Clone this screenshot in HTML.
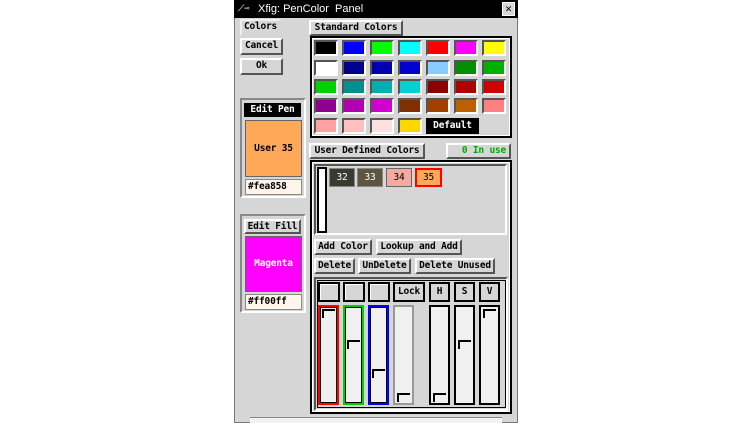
<!DOCTYPE html><html><head><style>
body{margin:0;width:752px;height:423px;background:#fff;position:relative;overflow:hidden;font-family:"DejaVu Sans Mono","Liberation Mono",monospace;font-weight:bold;font-size:9.5px;letter-spacing:-0.2px}
div{position:absolute;box-sizing:border-box;white-space:nowrap}
.b{border:2px solid;border-color:#fff #555 #555 #fff;background:#d6d6d6;text-align:center;line-height:12px;color:#000;padding:0}
.sw{width:24px;height:16px;border:2px solid;border-color:#555 #fff #fff #555}
.fr{border:2px solid #000;box-shadow:inset 0 0 0 1px #fff}
.sl{width:21px;height:100px;border:2px solid #000;background:#f0f0f0}
.th{left:2px;width:13px;height:9px;border-top:2px solid #000;border-left:2px solid #000}
</style></head><body>
<div style="left:234px;top:0;width:284px;height:423px;background:#d6d6d6;border:1px solid #777"></div>
<div style="left:234px;top:0;width:284px;height:18px;background:#000;color:#fff;font-family:'Liberation Sans',sans-serif;font-size:11px;font-weight:normal;letter-spacing:0;line-height:18px;padding-left:24px">Xfig: PenColor &nbsp;Panel</div>
<div style="left:238px;top:4px;width:16px;height:10px;color:#aaa;font-size:9px;line-height:10px">⟋⊸</div>
<div style="left:502px;top:2px;width:13px;height:14px;background:#d6d6d6;border:1px solid #fff;color:#000;font-size:11px;line-height:12px;text-align:center">✕</div>

<div class="b" style="left:240px;top:19px;width:41px;height:17px;border-color:#eee #d6d6d6 #d6d6d6 #eee">Colors</div>
<div class="b" style="left:240px;top:38px;width:43px;height:17px">Cancel</div>
<div class="b" style="left:240px;top:58px;width:43px;height:17px">Ok</div>

<div style="left:240px;top:98px;width:66px;height:100px;border:2px solid;border-color:#888 #fff #fff #888"></div>
<div style="left:244px;top:103px;width:57px;height:14px;background:#000;color:#fff;text-align:center;line-height:14px">Edit Pen</div>
<div style="left:245px;top:120px;width:57px;height:57px;background:#fea858;border:1px solid #666;text-align:center;line-height:55px">User 35</div>
<div style="left:245px;top:179px;width:57px;height:16px;background:#fff5ea;border:1px solid #888;line-height:14px;padding-left:2px">#fea858</div>

<div style="left:240px;top:214px;width:66px;height:99px;border:2px solid;border-color:#888 #fff #fff #888"></div>
<div class="b" style="left:244px;top:219px;width:57px;height:15px">Edit Fill</div>
<div style="left:245px;top:236px;width:57px;height:56px;background:#ff00ff;border:1px solid #666;color:#fff;text-align:center;line-height:54px">Magenta</div>
<div style="left:245px;top:294px;width:57px;height:16px;background:#fff5ea;border:1px solid #888;line-height:14px;padding-left:2px">#ff00ff</div>

<div class="b" style="left:309px;top:20px;width:94px;height:16px;line-height:12px">Standard Colors</div>
<div class="fr" style="left:310px;top:36px;width:202px;height:102px"></div>
<div class="sw" style="left:314px;top:40px;background:#000"></div><div class="sw" style="left:342px;top:40px;background:#00f"></div><div class="sw" style="left:370px;top:40px;background:#0f0"></div><div class="sw" style="left:398px;top:40px;background:#0ff"></div><div class="sw" style="left:426px;top:40px;background:#f00"></div><div class="sw" style="left:454px;top:40px;background:#f0f"></div><div class="sw" style="left:482px;top:40px;background:#ff0"></div>
<div class="sw" style="left:314px;top:60px;background:#fff"></div><div class="sw" style="left:342px;top:60px;background:#00008f"></div><div class="sw" style="left:370px;top:60px;background:#0000b0"></div><div class="sw" style="left:398px;top:60px;background:#0000d1"></div><div class="sw" style="left:426px;top:60px;background:#87ceff"></div><div class="sw" style="left:454px;top:60px;background:#008f00"></div><div class="sw" style="left:482px;top:60px;background:#00b000"></div>
<div class="sw" style="left:314px;top:79px;background:#00d100"></div><div class="sw" style="left:342px;top:79px;background:#008f8f"></div><div class="sw" style="left:370px;top:79px;background:#00b0b0"></div><div class="sw" style="left:398px;top:79px;background:#00d1d1"></div><div class="sw" style="left:426px;top:79px;background:#8f0000"></div><div class="sw" style="left:454px;top:79px;background:#b00000"></div><div class="sw" style="left:482px;top:79px;background:#d10000"></div>
<div class="sw" style="left:314px;top:98px;background:#8f008f"></div><div class="sw" style="left:342px;top:98px;background:#b000b0"></div><div class="sw" style="left:370px;top:98px;background:#d100d1"></div><div class="sw" style="left:398px;top:98px;background:#803000"></div><div class="sw" style="left:426px;top:98px;background:#a14000"></div><div class="sw" style="left:454px;top:98px;background:#bf6000"></div><div class="sw" style="left:482px;top:98px;background:#ff8080"></div>
<div class="sw" style="left:314px;top:118px;background:#ffa1a1"></div><div class="sw" style="left:342px;top:118px;background:#ffbfbf"></div><div class="sw" style="left:370px;top:118px;background:#ffe0e0"></div><div class="sw" style="left:398px;top:118px;background:#ffd700"></div>
<div style="left:426px;top:118px;width:53px;height:16px;background:#000;color:#fff;text-align:center;line-height:16px">Default</div>

<div class="b" style="left:309px;top:143px;width:116px;height:16px">User Defined Colors</div>
<div class="b" style="left:446px;top:143px;width:65px;height:16px;color:#0a0;text-align:right;padding-right:3px">0 In use</div>
<div class="fr" style="left:310px;top:160px;width:202px;height:254px"></div>
<div style="left:314px;top:164px;width:193px;height:71px;border:2px solid;border-color:#555 #fff #fff #555"></div>
<div style="left:317px;top:167px;width:10px;height:66px;background:#fff;border:2px solid #000"></div>
<div style="left:329px;top:168px;width:26px;height:19px;background:#3a3a30;color:#fff;border:1px solid #888;text-align:center;line-height:17px;font-weight:normal">32</div>
<div style="left:357px;top:168px;width:26px;height:19px;background:#5e5541;color:#fff;border:1px solid #888;text-align:center;line-height:17px;font-weight:normal">33</div>
<div style="left:386px;top:168px;width:26px;height:19px;background:#f4aaa0;color:#000;border:1px solid #666;text-align:center;line-height:17px;font-weight:normal">34</div>
<div style="left:415px;top:168px;width:27px;height:19px;background:#fea858;color:#000;border:2px solid #f00;text-align:center;line-height:15px;font-weight:normal">35</div>

<div class="b" style="left:314px;top:239px;width:58px;height:16px">Add Color</div>
<div class="b" style="left:376px;top:239px;width:86px;height:16px">Lookup and Add</div>
<div class="b" style="left:314px;top:258px;width:41px;height:16px">Delete</div>
<div class="b" style="left:358px;top:258px;width:53px;height:16px">UnDelete</div>
<div class="b" style="left:415px;top:258px;width:80px;height:16px">Delete Unused</div>

<div style="left:314px;top:277px;width:194px;height:134px;border:2px solid;border-color:#555 #fff #fff #555"></div>
<div class="fr" style="left:317px;top:280px;width:189px;height:128px;box-shadow:none;border-width:1px"></div>
<div class="b" style="left:318px;top:282px;width:22px;height:20px;border:2px solid #000;box-shadow:inset 1px 1px #fff"></div>
<div class="b" style="left:343px;top:282px;width:22px;height:20px;border:2px solid #000;box-shadow:inset 1px 1px #fff"></div>
<div class="b" style="left:368px;top:282px;width:22px;height:20px;border:2px solid #000;box-shadow:inset 1px 1px #fff"></div>
<div class="b" style="left:393px;top:282px;width:32px;height:20px;border:2px solid #000;line-height:16px">Lock</div>
<div class="b" style="left:429px;top:282px;width:21px;height:20px;border:2px solid #000;line-height:16px">H</div>
<div class="b" style="left:454px;top:282px;width:21px;height:20px;border:2px solid #000;line-height:16px">S</div>
<div class="b" style="left:479px;top:282px;width:21px;height:20px;border:2px solid #000;line-height:16px">V</div>

<div class="sl" style="left:318px;top:305px;border-color:#f00;box-shadow:inset 0 0 0 1px #000"><div class="th" style="top:2px"></div></div>
<div class="sl" style="left:343px;top:305px;border-color:#0c0;box-shadow:inset 0 0 0 1px #000"><div class="th" style="top:33px"></div></div>
<div class="sl" style="left:368px;top:305px;border-color:#00f;box-shadow:inset 0 0 0 1px #000"><div class="th" style="top:62px"></div></div>
<div class="sl" style="left:393px;top:305px;border-color:#999"><div class="th" style="top:86px"></div></div>
<div class="sl" style="left:429px;top:305px"><div class="th" style="top:86px"></div></div>
<div class="sl" style="left:454px;top:305px"><div class="th" style="top:33px"></div></div>
<div class="sl" style="left:479px;top:305px"><div class="th" style="top:2px"></div></div>
<div style="left:250px;top:417px;width:252px;height:6px;background:#f2f2f2;border-top:1px solid #888"></div>
</body></html>
